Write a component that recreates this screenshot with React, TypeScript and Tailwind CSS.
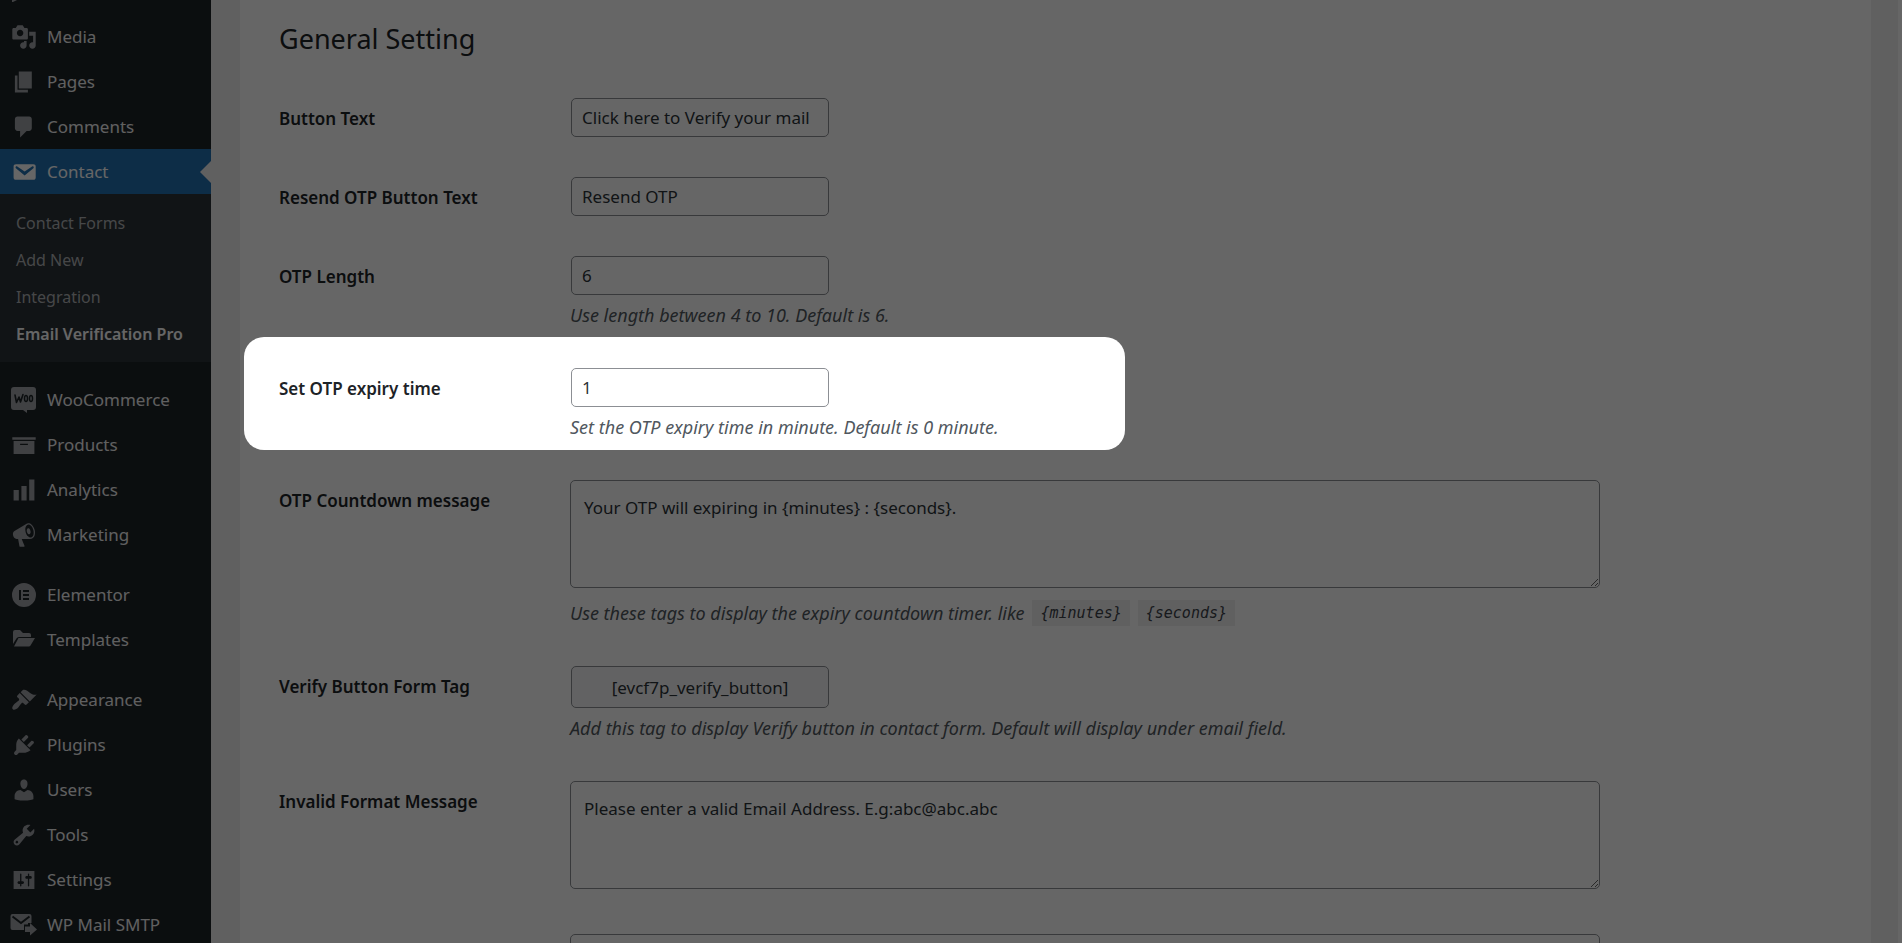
import type { ReactNode } from 'react';

interface MenuItem {
  label: string;
  icon: ReactNode;
  current?: boolean;
}

interface IconProps {
  d: string;
}

const Dashicon = ({ d }: IconProps) => (
  <svg viewBox="0 0 20 20" fill="currentColor" fillRule="evenodd" className="size-[26px]">
    <path d={d} />
  </svg>
);

const WooIcon = () => (
  <svg viewBox="0 0 26 26" fill="none" className="size-[26px]">
    <path
      fill="currentColor"
      d="M3 0h19a3 3 0 0 1 3 3v17a3 3 0 0 1-3 3h-6v3l-4-3H3a3 3 0 0 1-3-3V3a3 3 0 0 1 3-3z"
    />
    <path
      stroke="#1d2327"
      strokeWidth="1.6"
      strokeLinecap="round"
      strokeLinejoin="round"
      d="M4 8l1.500 7.500L8 10l1.500 5L12 7.500"
    />
    <ellipse cx="15" cy="11.500" rx="1.500" ry="3" stroke="#1d2327" strokeWidth="1.500" />
    <ellipse cx="20" cy="11.500" rx="1.500" ry="3" stroke="#1d2327" strokeWidth="1.500" />
  </svg>
);

const ElementorIcon = () => (
  <svg viewBox="0 0 26 26" fill="currentColor" fillRule="evenodd" className="size-[26px]">
    <path d="M13 1a12 12 0 1 1 0 24 12 12 0 0 1 0-24zM8 8v10h2V8zm4 0v2h6V8zm0 4v2h6v-2zm0 4v2h6v-2z" />
  </svg>
);

const TemplatesIcon = () => (
  <svg viewBox="0 0 26 26" fill="currentColor" className="size-[26px]">
    <path d="M2 17V5a2 2 0 0 1 2-2h5l3 3h6a2 2 0 0 1 2 2v2H8a3 3 0 0 0-2.600 1.500z" />
    <path d="M7.500 11H24l-4.500 7.500a2 2 0 0 1-1.700 1H3z" />
  </svg>
);

const MailSmtpIcon = () => (
  <svg viewBox="0 0 26 26" fill="currentColor" className="size-[26px] overflow-visible">
    <path d="M1.500 2h17A2 2 0 0 1 20.500 4v7H17v1.500h-4V18H1.500a2 2 0 0 1-2-2V4a2 2 0 0 1 2-2z" />
    <path d="M1.500 4.500l8.500 6.500 8.500-6.500" fill="none" stroke="#1d2327" strokeWidth="2" />
    <path d="M14 14.500h5V11l7 6.500-7 6V20h-5z" />
  </svg>
);

const menuGroups: MenuItem[][] = [
  [
    {
      label: 'Media',
      icon: (
        <Dashicon d="M13 11V4c0-.55-.45-1-1-1h-1.670L9 1H5L3.670 3H2c-.55 0-1 .45-1 1v7c0 .55.45 1 1 1h10c.55 0 1-.45 1-1zM7 4.500c1.380 0 2.500 1.120 2.500 2.500S8.380 9.500 7 9.500 4.500 8.380 4.500 7 5.620 4.500 7 4.500zM14 6h5v10.500c0 1.380-1.120 2.500-2.500 2.500S14 17.880 14 16.500s1.120-2.500 2.500-2.500c.17 0 .34.02.5.05V9h-3V6zm-4 8.050V13h2v3.500c0 1.380-1.120 2.500-2.500 2.500S7 17.880 7 16.500 8.120 14 9.500 14c.17 0 .34.02.5.05z" />
      ),
    },
    { label: 'Pages', icon: <Dashicon d="M6 15V2h10v13H6zm-1 1h8v2H3V5h2v11z" /> },
    {
      label: 'Comments',
      icon: (
        <Dashicon d="M5 2h9c1.100 0 2 .9 2 2v7c0 1.100-.9 2-2 2h-2l-5 5v-5H5c-1.100 0-2-.9-2-2V4c0-1.100.9-2 2-2z" />
      ),
    },
    {
      label: 'Contact',
      current: true,
      icon: (
        <Dashicon d="M3.870 4h13.250C18.370 4 19 4.590 19 5.790v8.420c0 1.190-.63 1.790-1.880 1.790H3.870c-1.250 0-1.880-.6-1.880-1.790V5.790c0-1.200.63-1.790 1.880-1.790zm6.620 8.600l6.740-5.530c.24-.2.43-.66.13-1.070-.29-.41-.82-.42-1.170-.17l-5.700 3.860L4.800 5.830c-.35-.25-.88-.24-1.170.17-.3.41-.11.87.13 1.070z" />
      ),
    },
  ],
  [
    { label: 'WooCommerce', icon: <WooIcon /> },
    { label: 'Products', icon: <Dashicon d="M19 4v2H1V4h18zM2 7h16v10H2V7zm11 3V9H7v1h6z" /> },
    { label: 'Analytics', icon: <Dashicon d="M18 18V2h-4v16h4zm-6 0V7H8v11h4zm-6 0v-8H2v8h4z" /> },
    {
      label: 'Marketing',
      icon: (
        <Dashicon d="M18.150 5.940c.46 1.620.38 3.220-.02 4.480-.42 1.280-1.260 2.180-2.300 2.480-.16.06-.26.06-.4.06-.06.02-.12.02-.18.02-.06.02-.14.02-.22.02h-6.800l2.220 5.500c.02.14-.06.26-.14.34-.08.1-.24.16-.34.16H6.950c-.1 0-.26-.06-.34-.16-.08-.08-.16-.2-.14-.34l-1-5.500H4.250l-.02-.02c-.5.06-1.080-.18-1.540-.62s-.88-1.080-1.060-1.880c-.24-.8-.2-1.560-.02-2.200.18-.62.58-1.080 1.060-1.300l.02-.02 9-5.400c.1-.06.18-.1.24-.16.06-.04.14-.08.24-.12.16-.08.28-.12.5-.18 1.040-.3 2.240.1 3.220.98s1.840 2.240 2.260 3.860zm-2.580 5.980h-.02c.4-.1.74-.34 1.040-.7.58-.7.86-1.760.86-3.040 0-.64-.1-1.300-.28-1.980-.34-1.360-1.020-2.500-1.780-3.240s-1.680-1.100-2.460-.88c-.82.22-1.400.96-1.700 2-.32 1.040-.28 2.360.06 3.720.38 1.360 1 2.500 1.800 3.240.78.74 1.620 1.100 2.480.88zm-2.540-7.080c.22-.04.42-.02.62.04.38.16.76.48 1.020 1s.42 1.200.42 1.780c0 .3-.04.56-.12.8-.18.48-.44.84-.86.94-.34.1-.8-.06-1.140-.4s-.64-.86-.78-1.500c-.18-.62-.12-1.240.02-1.720s.48-.84.82-.94z" />
      ),
    },
  ],
  [
    { label: 'Elementor', icon: <ElementorIcon /> },
    { label: 'Templates', icon: <TemplatesIcon /> },
  ],
  [
    {
      label: 'Appearance',
      icon: (
        <Dashicon d="M14.480 11.060L7.410 3.990l1.500-1.500c.5-.56 2.300-.47 3.510.32 1.210.8 1.430 1.280 2.910 2.100 1.180.64 2.450 1.260 4.450.85zm-.71.71L6.700 4.700 4.930 6.470c-.39.39-.39 1.020 0 1.410l1.060 1.060c.39.39.39 1.030 0 1.420-.6.6-1.430 1.110-2.210 1.690-.35.26-.7.53-1.010.84C1.430 14.230.4 16.080 1.400 17.070c.99 1 2.840-.03 4.180-1.360.31-.31.58-.66.85-1.020.57-.78 1.080-1.610 1.690-2.210.39-.39 1.020-.39 1.410 0l1.060 1.060c.39.39 1.020.39 1.410 0z" />
      ),
    },
    {
      label: 'Plugins',
      icon: (
        <Dashicon d="M13.110 4.360L9.870 7.600 8 5.730l3.240-3.240c.35-.34 1.050-.2 1.560.32.52.51.66 1.210.31 1.550zm-8 1.770l.91-1.120 9.010 9.010-1.190.84c-.71.71-2.630 1.160-3.820 1.160H6.140L4.900 17.260c-.59.59-1.540.59-2.120 0-.59-.58-.59-1.530 0-2.120l1.240-1.240v-3.880c0-1.130.4-3.190 1.090-3.890zm7.260 3.970l3.240-3.240c.34-.35 1.040-.21 1.550.31.52.51.66 1.210.31 1.550l-3.240 3.250z" />
      ),
    },
    {
      label: 'Users',
      icon: (
        <Dashicon d="M10 9.250c-2.270 0-2.730-3.440-2.730-3.440C7 4.020 7.820 2 9.970 2c2.160 0 2.980 2.020 2.710 3.810 0 0-.41 3.440-2.680 3.440zm0 2.570L12.720 10c2.390 0 4.520 2.330 4.520 4.530v2.490s-3.650 1.130-7.240 1.130c-3.650 0-7.240-1.130-7.240-1.130v-2.490c0-2.250 1.940-4.480 4.470-4.480z" />
      ),
    },
    {
      label: 'Tools',
      icon: (
        <Dashicon d="M16.680 9.770c-1.340 1.340-3.300 1.670-4.950.99l-5.410 6.520c-.99.99-2.590.99-3.580 0s-.99-2.590 0-3.570l6.520-5.420c-.68-1.650-.35-3.610.99-4.950 1.280-1.280 3.120-1.620 4.720-1.060l-2.890 2.890 2.820 2.820 2.860-2.870c.53 1.580.18 3.390-1.080 4.650zM3.810 16.210c.4.39 1.040.39 1.430 0 .4-.4.4-1.040 0-1.430-.39-.4-1.030-.4-1.430 0-.39.39-.39 1.030 0 1.430z" />
      ),
    },
    {
      label: 'Settings',
      icon: (
        <Dashicon d="M18 17V3H2v14h16zM8 11h1c.55 0 1 .45 1 1s-.45 1-1 1H8v1.500c0 .28-.22.5-.5.5s-.5-.22-.5-.5V13H6c-.55 0-1-.45-1-1s.45-1 1-1h1V5.500c0-.28.22-.5.5-.5s.5.22.5.5V11zm5-2h-1c-.55 0-1-.45-1-1s.45-1 1-1h1V5.500c0-.28.22-.5.5-.5s.5.22.5.5V7h1c.55 0 1 .45 1 1s-.45 1-1 1h-1v5.500c0 .28-.22.5-.5.5s-.5-.22-.5-.5V9z" />
      ),
    },
    { label: 'WP Mail SMTP', icon: <MailSmtpIcon /> },
  ],
];

const submenu = ['Contact Forms', 'Add New', 'Integration', 'Email Verification Pro'];

const Sidebar = () => (
  <nav className="w-[211px] shrink-0 overflow-hidden bg-[#1d2327]">
    <div className="h-[14px] pl-3 text-[#a0a3a8]">
      <svg viewBox="0 0 6 2" fill="currentColor" className="h-[2px] w-[6px]">
        <path d="M0 0h5L1 2H0z" />
      </svg>
    </div>
    <div className="flex flex-col gap-[15px]">
      {menuGroups.map((group, index) => (
        <ul key={index}>
          {group.map((item) => (
            <li key={item.label}>
              <a
                href="#"
                className={
                  item.current
                    ? 'relative flex h-[45px] items-center gap-[10px] bg-[#2271b1] pl-[11px] text-[17px] text-white'
                    : 'flex h-[45px] items-center gap-[10px] pl-[11px] text-[17px] text-[#f0f0f1]'
                }
              >
                <span className={item.current ? 'text-white' : 'text-[#a0a3a8]'}>{item.icon}</span>
                {item.label}
                {item.current ? (
                  <span className="absolute right-0 border-y-[11px] border-r-[11px] border-y-transparent border-r-[#f0f0f1]" />
                ) : null}
              </a>
              {item.current ? (
                <ul className="bg-[#2c3338] py-[10px]">
                  {submenu.map((name) => (
                    <li key={name}>
                      <a
                        href="#"
                        className={
                          name === 'Email Verification Pro'
                            ? 'flex h-[37px] items-center pl-4 text-[16px] font-semibold text-white'
                            : 'flex h-[37px] items-center pl-4 text-[16px] text-[#b0b2b5]'
                        }
                      >
                        {name}
                      </a>
                    </li>
                  ))}
                </ul>
              ) : null}
            </li>
          ))}
        </ul>
      ))}
    </div>
  </nav>
);

interface RowProps {
  id: string;
  label: string;
  spotlight?: boolean;
  children: ReactNode;
}

const Row = ({ id, label, spotlight, children }: RowProps) => (
  <div
    className={
      spotlight
        ? 'relative isolate z-10 grid grid-cols-[291px_1fr] py-5'
        : 'grid grid-cols-[291px_1fr] py-5'
    }
  >
    {/* the huge shadow dims the rest of the page */}
    {spotlight ? (
      <div className="absolute -top-[11px] bottom-[10px] -left-[35px] -z-10 w-[881px] rounded-[20px] bg-white shadow-[0_0_0_3000px_rgba(0,0,0,0.6)]" />
    ) : null}
    <label htmlFor={id} className="pt-[9px] text-[17px] leading-6 font-semibold text-[#1d2327]">
      {label}
    </label>
    <div>{children}</div>
  </div>
);

interface FieldProps {
  id: string;
  value: string;
}

const TextField = ({ id, value }: FieldProps) => (
  <input
    id={id}
    type="text"
    defaultValue={value}
    className="mx-px block h-[39px] w-[258px] rounded-[5px] border border-[#8c8f94] bg-white px-[10px] text-[17px] text-[#2c3338]"
  />
);

const TextArea = ({ id, value }: FieldProps) => (
  <textarea
    id={id}
    defaultValue={value}
    className="mb-[5px] block h-[108px] w-full max-w-[1030px] rounded-[5px] border border-[#8c8f94] bg-white px-[13px] py-[14px] text-[17px] leading-[26px] text-[#2c3338]"
  />
);

const Description = ({ children }: { children: ReactNode }) => (
  <p className="pt-[7px] text-[18px] leading-[26px] text-[#50575e] italic">{children}</p>
);

const Tag = ({ children }: { children: ReactNode }) => (
  <code className="ml-2 inline-block bg-[#f0f0f1] px-2 align-top font-['DejaVu_Sans_Mono',monospace] text-[15px] leading-[26px] text-[#3c434a]">
    {children}
  </code>
);

const App = () => {
  return (
    <div className="flex h-screen overflow-hidden bg-[#f0f0f1] font-['Noto_Sans','Open_Sans',sans-serif]">
      <Sidebar />
      <main className="mr-[27px] ml-[29px] min-w-0 flex-1 bg-white px-[39px]">
        <h2 className="pt-[21px] pb-[21px] text-[27px] leading-9 text-[#1d2327]">General Setting</h2>
        <form>
          <Row id="button-text" label="Button Text">
            <TextField id="button-text" value="Click here to Verify your mail" />
          </Row>
          <Row id="resend-text" label="Resend OTP Button Text">
            <TextField id="resend-text" value="Resend OTP" />
          </Row>
          <Row id="otp-length" label="OTP Length">
            <TextField id="otp-length" value="6" />
            <Description>Use length between 4 to 10. Default is 6.</Description>
          </Row>
          <Row id="otp-expiry" label="Set OTP expiry time" spotlight>
            <TextField id="otp-expiry" value="1" />
            <Description>Set the OTP expiry time in minute. Default is 0 minute.</Description>
          </Row>
          <Row id="countdown" label="OTP Countdown message">
            <TextArea id="countdown" value="Your OTP will expiring in {minutes} : {seconds}." />
            <Description>
              Use these tags to display the expiry countdown timer. like
              <Tag>{'{minutes}'}</Tag>
              <Tag>{'{seconds}'}</Tag>
            </Description>
          </Row>
          <Row id="form-tag" label="Verify Button Form Tag">
            <input
              id="form-tag"
              type="text"
              readOnly
              value="[evcf7p_verify_button]"
              className="mx-px block h-[42px] w-[258px] rounded-[5px] border border-[#8c8f94] bg-[#f6f6f7] text-center text-[17px] text-[#2c3338]"
            />
            <Description>
              Add this tag to display Verify button in contact form. Default will display under email
              field.
            </Description>
          </Row>
          <Row id="invalid-format" label="Invalid Format Message">
            <TextArea
              id="invalid-format"
              value="Please enter a valid Email Address. E.g:abc@abc.abc"
            />
          </Row>
          <Row id="next-message" label="">
            <TextArea id="next-message" value="" />
          </Row>
        </form>
      </main>
      <div className="w-1 shrink-0 bg-white" />
    </div>
  );
};

export default App;
